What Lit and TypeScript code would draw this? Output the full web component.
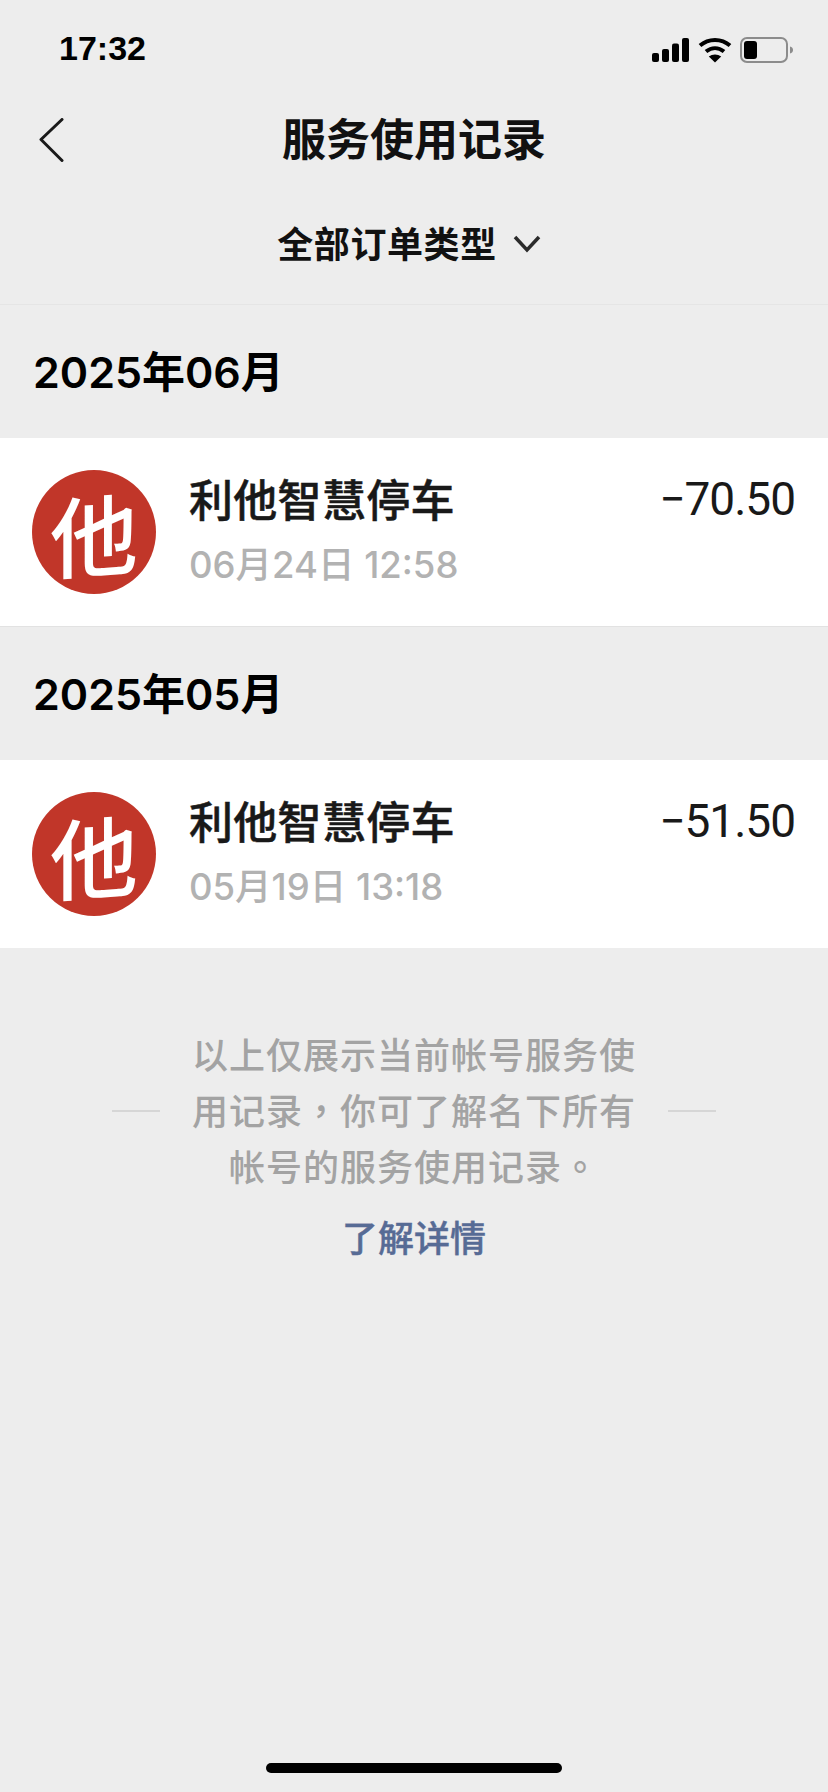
import { LitElement, html, css } from "lit";
import { customElement } from "lit/decorators.js";

const ROWS = [
  { month: "2025年06月", time: "06月24日 12:58", amount: "−70.50", divider: true },
  { month: "2025年05月", time: "05月19日 13:18", amount: "−51.50", divider: false },
];

@customElement("app-root")
export class AppRoot extends LitElement {
  static styles = css`
    :host {
      display: block;
      width: 828px;
      height: 1792px;
      background: #ededed;
      font-family: "Noto Sans", "Noto Sans CJK SC", sans-serif;
      color: #111;
      overflow: hidden;
    }
    .page { height: 1792px; display: flex; flex-direction: column; }
    .status {
      height: 96px;
      box-sizing: border-box;
      padding: 4px 34px 0 59px;
      display: flex;
      align-items: center;
      justify-content: space-between;
    }
    .clock {
      font-family: "Liberation Sans", sans-serif;
      font-weight: 700;
      font-size: 34px;
      line-height: 36px;
      color: #000;
      margin-top: -4px;
    }
    .status-icons { display: flex; align-items: center; gap: 8px; }
    .nav {
      height: 88px;
      box-sizing: border-box;
      padding-bottom: 7px;
      display: grid;
      grid-template-columns: 100px 1fr 100px;
      align-items: center;
    }
    .back { margin: 7px 0 0 39px; display: block; }
    .title {
      font-family: "Noto Sans CJK SC", sans-serif;
      font-size: 44px;
      font-weight: 700;
      line-height: 56px;
      text-align: center;
      color: #111;
    }
    .filter {
      height: 121px;
      box-sizing: border-box;
      padding: 0 10px 5px 0;
      display: flex;
      align-items: center;
      justify-content: center;
      gap: 16px;
      border-bottom: 1px solid #e5e5e5;
      font-family: "Noto Sans CJK SC", sans-serif;
      font-size: 36px;
      font-weight: 700;
      letter-spacing: 0.6px;
      color: #111;
    }
    .chev { margin-top: 5px; }
    .month {
      height: 133px;
      box-sizing: border-box;
      padding: 0 33px 5px;
      display: flex;
      align-items: center;
      font-size: 43px;
      font-weight: 600;
      font-family: "Inter", "Noto Sans CJK SC", sans-serif;
      color: #000;
    }
    .row {
      height: 188px;
      box-sizing: content-box;
      background: #fff;
      padding: 0 33px 0 32px;
      display: flex;
      align-items: center;
      gap: 33px;
    }
    .row.divider { border-bottom: 1px solid #e2e2e2; }
    .logo {
      width: 124px;
      height: 124px;
      border-radius: 50%;
      background: #c13629;
      color: #fff;
      display: flex;
      align-items: center;
      justify-content: center;
      font-family: "Noto Sans CJK SC", sans-serif;
      font-size: 88px;
      font-weight: 500;
      line-height: 1;
      flex: none;
    }
    .logo span { display: block; transform: skewY(-4deg); }
    .info { flex: 1; display: flex; flex-direction: column; gap: 12px; margin-top: -8px; }
    .name {
      font-family: "Noto Sans CJK SC", sans-serif;
      font-size: 44px;
      font-weight: 500;
      letter-spacing: 0.3px;
      line-height: 62px;
      color: #191919;
      -webkit-text-stroke: 0.5px #191919;
    }
    .time {
      font-family: "Inter", "Noto Sans CJK SC", sans-serif;
      font-size: 36.5px;
      font-weight: 500;
      line-height: 48px;
      color: #b2b2b2;
    }
    .amount {
      align-self: flex-start;
      margin-top: 34px;
      font-family: "Roboto", sans-serif;
      font-size: 46px;
      font-weight: 400;
      letter-spacing: -1px;
      line-height: 54px;
      color: #191919;
    }
    .note {
      margin-top: 77px;
      display: grid;
      grid-template-columns: 48px 444px 48px;
      justify-content: center;
      align-items: center;
      column-gap: 32px;
    }
    .rule { height: 2px; background: #d6d6d6; }
    .note-text {
      padding-bottom: 3px;
      font-family: "Noto Sans CJK SC", sans-serif;
      font-size: 36px;
      font-weight: 500;
      letter-spacing: 1px;
      line-height: 56px;
      color: #a3a3a3;
      text-align: center;
      white-space: nowrap;
    }
    .p { font-family: "Noto Sans CJK TC", sans-serif; }
    .link {
      margin-top: 12px;
      font-family: "Noto Sans CJK SC", sans-serif;
      font-size: 36px;
      font-weight: 500;
      line-height: 56px;
      color: #576b95;
      text-align: center;
      -webkit-text-stroke: 0.4px #576b95;
    }
    .spacer { flex: 1; }
    .home {
      align-self: center;
      width: 296px;
      height: 10px;
      border-radius: 5px;
      background: #000;
      margin-bottom: 19px;
    }
  `;

  render() {
    return html`
      <div class="page">
        <div class="status">
          <span class="clock">17:32</span>
          <div class="status-icons">
            <svg width="38" height="24" viewBox="0 0 38 24" fill="#000">
              <rect x="0" y="15" width="7" height="9" rx="2"/>
              <rect x="10" y="11" width="7" height="13" rx="2"/>
              <rect x="20" y="5.5" width="7" height="18.5" rx="2"/>
              <rect x="30" y="0" width="7" height="24" rx="2"/>
            </svg>
            <svg width="34" height="26" viewBox="0 0 34 26" fill="none" stroke="#000" stroke-width="4">
              <path d="M2 8.5C10.5 1 23.5 1 32 8.5"/>
              <path d="M8 14.5C13.5 10 20.5 10 26 14.5"/>
              <path d="M17 25.5L10.8 19.5C14.5 16.7 19.5 16.7 23.2 19.5Z" fill="#000" stroke="none"/>
            </svg>
            <svg width="54" height="26" viewBox="0 0 54 26">
              <rect x="1" y="1" width="46" height="24" rx="6" fill="none" stroke="#8c8c8c" stroke-width="2"/>
              <rect x="4" y="4" width="13" height="18" rx="3" fill="#000"/>
              <path d="M50 9.5C52 10 53 11.3 53 13C53 14.7 52 16 50 16.5Z" fill="#8c8c8c"/>
            </svg>
          </div>
        </div>
        <div class="nav">
          <svg class="back" width="26" height="44" viewBox="0 0 26 44" fill="none" stroke="#1a1a1a" stroke-width="3" stroke-linecap="round" stroke-linejoin="round">
            <path d="M23 1.5L2 21.5L23 42.5"/>
          </svg>
          <div class="title">服务使用记录</div>
          <div></div>
        </div>
        <div class="filter">
          <span>全部订单类型</span>
          <svg class="chev" width="28" height="18" viewBox="0 0 28 18" fill="none" stroke="#2b2b2b" stroke-width="3.5">
            <path d="M2 2L14 15L26 2"/>
          </svg>
        </div>
        ${ROWS.map(
          (r) => html`
            <div class="month">${r.month}</div>
            <div class="row ${r.divider ? "divider" : ""}">
              <div class="logo"><span>他</span></div>
              <div class="info">
                <div class="name">利他智慧停车</div>
                <div class="time">${r.time}</div>
              </div>
              <div class="amount">${r.amount}</div>
            </div>
          `
        )}
        <div class="note">
          <div class="rule"></div>
          <div class="note-text">
            <div>以上仅展示当前帐号服务使</div>
            <div>用记录<span class="p">，</span>你可了解名下所有</div>
            <div>帐号的服务使用记录<span class="p">。</span></div>
          </div>
          <div class="rule"></div>
        </div>
        <div class="link">了解详情</div>
        <div class="spacer"></div>
        <div class="home"></div>
      </div>
    `;
  }
}
